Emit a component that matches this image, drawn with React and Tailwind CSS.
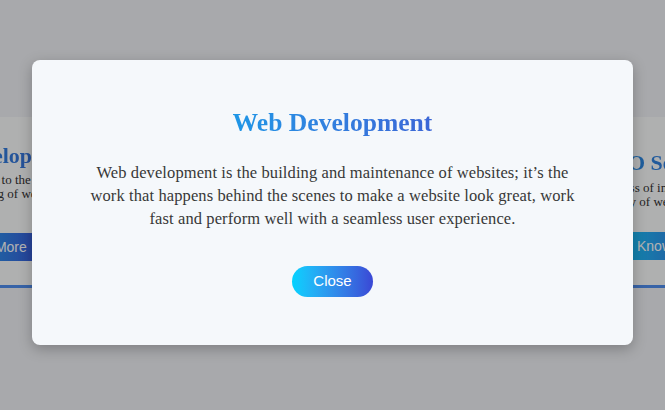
import React from "react";

function Card({ title, text, textWidth, pt, titleMl, btnMl, paraMt, btnMt }) {
  return (
    <div className={`w-[310px] h-[171px] shrink-0 bg-[#fbfcfd] border-b-[3px] border-[#4f8ef0] px-[20px] flex flex-col items-start ${pt}`}>
      <h3
        className={`font-['Liberation_Serif','Times_New_Roman',serif] text-[22px] leading-[28px] font-bold whitespace-nowrap bg-linear-to-r from-[#1e96e6] to-[#3b66d6] bg-clip-text text-transparent ${titleMl}`}
      >
        {title}
      </h3>
      <p className={`font-['Liberation_Serif','Times_New_Roman',serif] text-[13px] leading-[14px] text-[#333] ${textWidth} ${paraMt}`}>
        {text}
      </p>
      <button
        className={`font-['Liberation_Sans',Arial,sans-serif] h-[28px] px-[24px] rounded-[4px] text-[14px] text-white whitespace-nowrap bg-linear-to-r from-[#00d2ff] to-[#3a47d5] ${btnMl} ${btnMt}`}
      >
        Know More
      </button>
    </div>
  );
}

export default function App() {
  return (
    <div className="relative w-[665px] h-[410px] overflow-hidden bg-[#f1f3f6]">
      <div className="flex items-start pt-[117px] ml-[-100px] gap-[30px]">
        <Card
          title="Web Development"
          text="Web dev refers to the building and maintaining of websites for all."
          textWidth="w-[168px]"
          pt="pt-[25px]"
          titleMl="ml-[-12px]"
          paraMt="mt-[3px]"
          btnMt="mt-[18px]"
          btnMl="ml-[12px]"
        />
        <Card
          title="App Development"
          text="App development is the process of building software for phones."
          textWidth="w-[200px]"
          pt="pt-[25px]"
          titleMl="ml-[0px]"
          paraMt="mt-[3px]"
          btnMt="mt-[18px]"
          btnMl="ml-[0px]"
        />
        <Card
          title="SEO Services"
          text="Process of increasing the quality of website traffic."
          textWidth="w-[150px]"
          pt="pt-[32px]"
          titleMl="ml-[1px]"
          paraMt="mt-[4px]"
          btnMt="mt-[23px]"
          btnMl="ml-[13px]"
        />
      </div>

      <div className="absolute inset-0 bg-black/30 flex items-center justify-center">
        <div className="w-[601px] mt-[-5px] rounded-[8px] bg-[#f5f8fb] shadow-[0_4px_14px_rgba(0,0,0,0.25)] flex flex-col items-center pt-[47px] pb-[48px]">
          <h2 className="font-['Liberation_Serif','Times_New_Roman',serif] text-[25.6px] leading-[32px] font-bold bg-linear-to-r from-[#1e96e6] to-[#3b66d6] bg-clip-text text-transparent">
            Web Development
          </h2>
          <p className="font-['Liberation_Serif','Times_New_Roman',serif] mt-[21.5px] w-[500px] text-center text-[16.5px] tracking-[0.1px] leading-[23px] text-[#383838]">
            Web development is the building and maintenance of websites; it’s the work that happens behind the scenes to make a website look great, work fast and perform well with a seamless user experience.
          </p>
          <button className="font-['Liberation_Sans',Arial,sans-serif] mt-[36.5px] w-[81px] h-[31px] rounded-full text-[15px] text-white bg-linear-to-r from-[#00d2ff] to-[#3a47d5]">
            Close
          </button>
        </div>
      </div>
    </div>
  );
}
